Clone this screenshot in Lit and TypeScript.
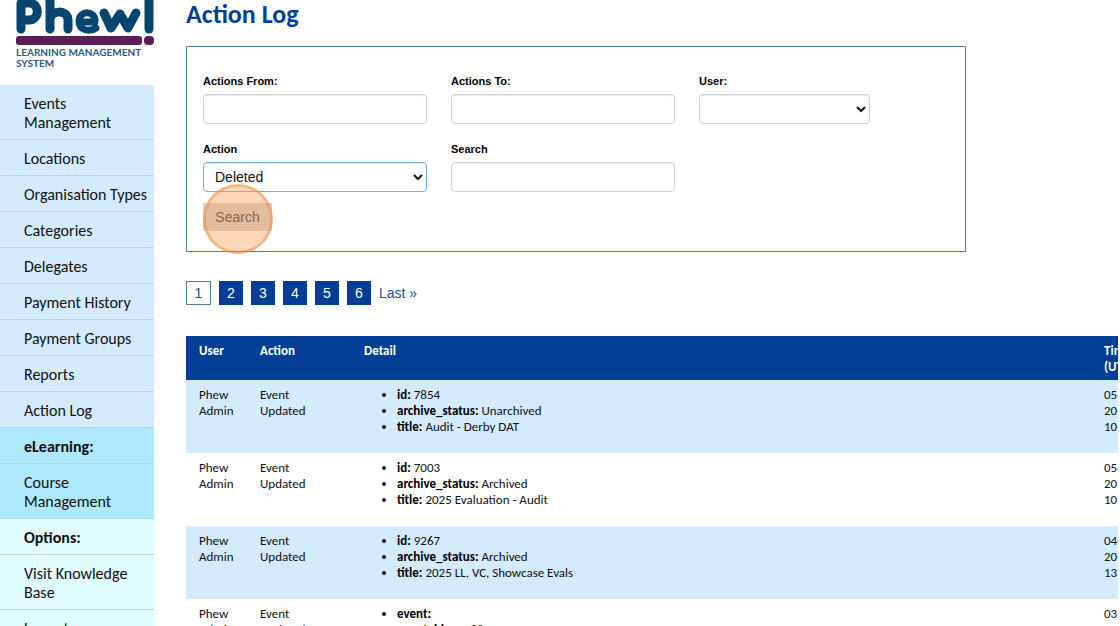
import { LitElement, html, css, nothing } from "lit";
import { customElement } from "lit/decorators.js";

interface MenuItem { text: string; heading?: boolean; tone: string }
interface Entry { action: string; details: [string, string][]; nested?: [string, string][]; time: string[] }

const MENU: MenuItem[] = [
  { text: "Events Management", tone: "main" },
  { text: "Locations", tone: "main" },
  { text: "Organisation Types", tone: "main" },
  { text: "Categories", tone: "main" },
  { text: "Delegates", tone: "main" },
  { text: "Payment History", tone: "main" },
  { text: "Payment Groups", tone: "main" },
  { text: "Reports", tone: "main" },
  { text: "Action Log", tone: "main" },
  { text: "eLearning:", heading: true, tone: "learning" },
  { text: "Course Management", tone: "learning" },
  { text: "Options:", heading: true, tone: "options" },
  { text: "Visit Knowledge Base", tone: "options" },
  { text: "Logout", tone: "options" },
];

const ENTRIES: Entry[] = [
  { action: "Event Updated", details: [["id", "7854"], ["archive_status", "Unarchived"], ["title", "Audit - Derby DAT"]], time: ["05-", "20", "10"] },
  { action: "Event Updated", details: [["id", "7003"], ["archive_status", "Archived"], ["title", "2025 Evaluation - Audit"]], time: ["05-", "20", "10"] },
  { action: "Event Updated", details: [["id", "9267"], ["archive_status", "Archived"], ["title", "2025 LL, VC, Showcase Evals"]], time: ["04-", "20", "13"] },
  { action: "Event Updated", details: [["event", ""]], nested: [["event_id", "10288"]], time: ["03-", "20"] },
];

@customElement("app-root")
export class AppRoot extends LitElement {
  static styles = css`
    :host {
      display: flex;
      height: 100vh;
      overflow: hidden;
      background: #fff;
      color: #111;
      font-family: Carlito, Lato, sans-serif;
    }
    * { box-sizing: border-box; }
    a { color: inherit; text-decoration: none; }
    .side { flex: none; width: 154px; }
    .brand { display: block; height: 85px; padding-left: 16px; color: #2c5a80; }
    .logo { display: block; width: 138px; height: 47px; }
    .tagline {
      margin: 0;
      font: 700 10px/11px Lato, sans-serif;
      white-space: nowrap;
    }
    .menu { margin: 0; padding: 0; list-style: none; font-size: 16px; line-height: 19px; }
    .item { padding: 9px 4px 7px 24px; border-bottom: 1px solid #bdd3dc; }
    .main { background: #d3eaff; }
    .learning { background: #aee8ff; }
    .options { background: #e2fdff; }
    .heading { font-weight: 700; }
    .content { flex: 1; min-width: 0; overflow: hidden; margin: 0 2px 0 32px; }
    .title { margin: 0 0 17px; font-size: 26px; line-height: 29px; font-weight: 700; color: #003f95; }
    .filter {
      display: grid;
      grid-template-columns: repeat(3, 224px);
      gap: 16px 24px;
      max-width: 780px;
      padding: 25px 16px 20px;
      border: 1px solid #557f96;
      font-family: "Liberation Sans", Arial, sans-serif;
    }
    .field { display: flex; flex-direction: column; }
    .label { margin-bottom: 4px; font-size: 11px; line-height: 18px; font-weight: 700; color: #000; }
    .control {
      width: 100%;
      height: 30px;
      padding: 0 10px;
      border: 1px solid #d0d0d0;
      border-radius: 4px;
      background: #fff;
      box-shadow: inset 0 1px 1px rgba(0, 0, 0, 0.08);
      font: 14px/20px "Liberation Sans", Arial, sans-serif;
      color: #111;
      outline: none;
    }
    select.control { padding: 0 0 0 7px; }
    .short { width: 171px; }
    .active { border-color: #6fb3d6; }
    .actions { grid-column: 1 / -1; display: flex; position: relative; margin-top: -5px; }
    .submit {
      width: 69px;
      height: 28px;
      margin: 0;
      padding: 0;
      border: 0;
      background: #d4d4d4;
      font: 14px/20px "Liberation Sans", Arial, sans-serif;
      color: #444;
    }
    .halo {
      position: absolute;
      left: 0;
      top: -19px;
      width: 70px;
      height: 70px;
      border: 3px solid rgba(240, 140, 60, 0.65);
      border-radius: 50%;
      background: rgba(249, 150, 75, 0.4);
      background-clip: padding-box;
      pointer-events: none;
    }
    .pages {
      display: flex;
      gap: 8px;
      margin: 29px 0 31px;
      font: 14px/24px "Liberation Sans", Arial, sans-serif;
      color: #17509a;
    }
    .page { width: 24px; height: 24px; text-align: center; background: #003f95; color: #fff; }
    .current { width: 25px; border: 1px solid #557f96; line-height: 22px; background: #fff; color: #17509a; }
    .log { width: calc(100% + 48px); table-layout: fixed; border-collapse: collapse; font-size: 13px; line-height: 16px; }
    .col-user { width: 61px; }
    .col-action { width: 104px; }
    .col-time { width: 75px; }
    th { height: 44px; padding: 7px 0 5px 13px; text-align: left; vertical-align: top; background: #003f95; color: #fff; }
    td { height: 73px; padding: 7px 0 0 13px; vertical-align: top; }
    .entry:nth-child(odd) { background: #d3eaff; }
    .narrow { width: 50px; }
    .list { margin: 0; padding: 0 0 0 33px; }
    .list .list { padding: 0; list-style: none; }
    .key { color: #000; font-weight: 700; }
    .line { display: block; }
  `;

  private details(items: [string, string][], nested?: [string, string][]): unknown {
    return html`<ul class="list">
      ${items.map(([key, value]) => html`<li><span class="key">${key}:</span> ${value}${nested ? this.details(nested) : nothing}</li>`)}
    </ul>`;
  }

  render() {
    return html`
      <aside class="side">
        <a class="brand" href="#">
          <svg class="logo" viewBox="0 0 138 47" role="img" aria-label="Phew!">
            <g fill="none" stroke="#04466f" stroke-width="9" stroke-linecap="round" stroke-linejoin="round">
              <path d="M5 29V3H13C24 3 24 20 13 20H6" />
              <path d="M34 -4V29M34 20C34 10 52 9 52 20V29" />
              <path d="M64 22H79C80 10 63 10 63 21C63 31 74 32 80 28" stroke-width="7" />
              <path d="M88 13L95 28L104 14L112 28L120 13" />
              <path d="M133 -4V29" />
            </g>
            <rect x="0" y="36" width="126" height="9" rx="3" fill="#5b1e55" />
            <rect x="128" y="36" width="10" height="9" rx="4" fill="#5b1e55" />
          </svg>
          <p class="tagline">LEARNING MANAGEMENT<br />SYSTEM</p>
        </a>
        <nav>
          <ul class="menu">
            ${MENU.map((m) => html`<li class="item ${m.tone} ${m.heading ? "heading" : ""}">${m.heading ? m.text : html`<a href="#">${m.text}</a>`}</li>`)}
          </ul>
        </nav>
      </aside>
      <main class="content">
        <h1 class="title">Action Log</h1>
        <form class="filter">
          <div class="field"><label class="label" for="from">Actions From:</label><input class="control" id="from" type="text" /></div>
          <div class="field"><label class="label" for="to">Actions To:</label><input class="control" id="to" type="text" /></div>
          <div class="field"><label class="label" for="user">User:</label><select class="control short" id="user"><option></option></select></div>
          <div class="field"><label class="label" for="action">Action</label><select class="control active" id="action"><option>Deleted</option></select></div>
          <div class="field"><label class="label" for="search">Search</label><input class="control" id="search" type="text" /></div>
          <div class="actions"><button class="submit" type="button">Search</button><span class="halo"></span></div>
        </form>
        <nav class="pages" aria-label="Pages">
          <span class="page current">1</span>
          ${[2, 3, 4, 5, 6].map((n) => html`<a class="page" href="#">${n}</a>`)}
          <a href="#">Last »</a>
        </nav>
        <table class="log">
          <colgroup><col class="col-user" /><col class="col-action" /><col /><col class="col-time" /></colgroup>
          <thead><tr><th>User</th><th>Action</th><th>Detail</th><th>Time<br />(UTC)</th></tr></thead>
          <tbody>
            ${ENTRIES.map((e) => html`<tr class="entry">
              <td>Phew Admin</td>
              <td><div class="narrow">${e.action}</div></td>
              <td>${this.details(e.details, e.nested)}</td>
              <td>${e.time.map((t) => html`<span class="line">${t}</span>`)}</td>
            </tr>`)}
          </tbody>
        </table>
      </main>
    `;
  }
}
